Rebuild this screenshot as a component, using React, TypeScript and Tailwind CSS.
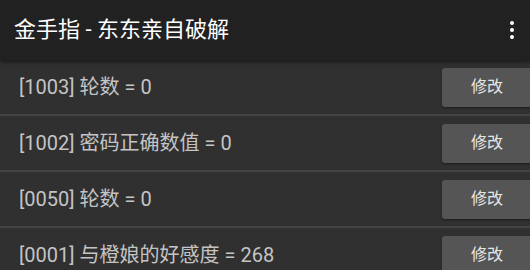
const rows = [
  { id: '1003', label: '轮数', value: '0' },
  { id: '1002', label: '密码正确数值', value: '0' },
  { id: '0050', label: '轮数', value: '0' },
  { id: '0001', label: '与橙娘的好感度', value: '268' },
];

export default function App() {
  return (
    <div
      className="w-[530px] h-[270px] overflow-hidden bg-[#303030]"
      style={{ fontFamily: 'Roboto, "Noto Sans CJK SC", sans-serif' }}
    >
      {/* Toolbar */}
      <div className="relative z-10 flex h-[60px] items-center justify-between bg-[#212121] pl-[14px] pr-[16px] shadow-[0_2px_4px_rgba(0,0,0,0.5)]">
        <h1 className="text-[22px] leading-none text-white">金手指 - 东东亲自破解</h1>
        <div className="flex flex-col items-center gap-[3px]">
          <span className="h-[4px] w-[4px] rounded-full bg-white" />
          <span className="h-[4px] w-[4px] rounded-full bg-white" />
          <span className="h-[4px] w-[4px] rounded-full bg-white" />
        </div>
      </div>

      {/* List */}
      <div className="flex flex-col">
        {rows.map((row) => (
          <div key={row.id} className="flex h-[56px] shrink-0 items-center justify-between border-b-2 border-[#444444] pl-[19px]">
            <span className="text-[20px] leading-none text-[#c4c4c4]">
              [{row.id}] {row.label} = {row.value}
            </span>
            <button
              type="button"
              className="mr-[-2px] h-[39px] w-[90px] shrink-0 rounded-[3px] bg-[#555555] text-[16px] text-[#e6e6e6] shadow-[0_1px_2px_rgba(0,0,0,0.4)]"
            >
              修改
            </button>
          </div>
        ))}
      </div>
    </div>
  );
}
